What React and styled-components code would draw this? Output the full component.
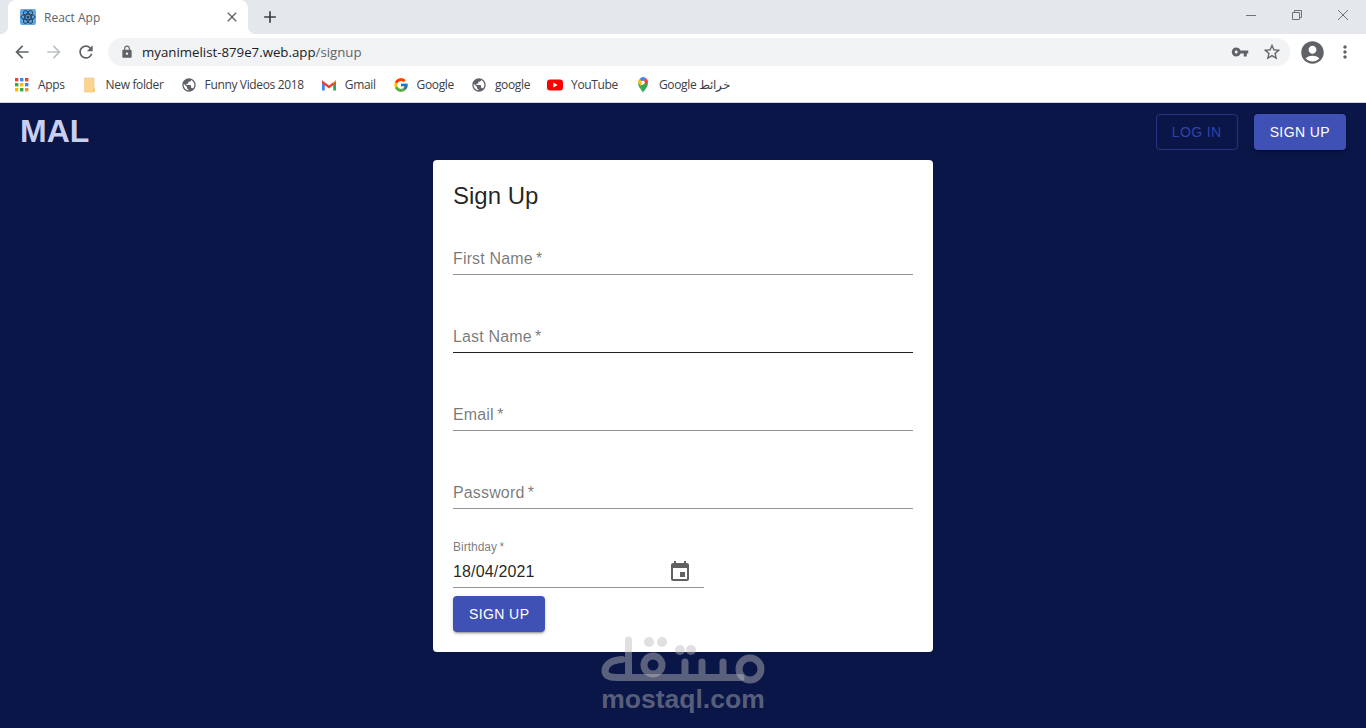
import React from "react";
import styled, { createGlobalStyle } from "styled-components";
import {
  MdArrowBack,
  MdArrowForward,
  MdRefresh,
  MdLock,
  MdVpnKey,
  MdStarBorder,
  MdAccountCircle,
  MdMoreVert,
  MdEvent,
  MdPublic,
  MdClose,
  MdAdd,
} from "react-icons/md";
import { FcGoogle } from "react-icons/fc";

const GlobalStyle = createGlobalStyle`
  html, body {
    margin: 0;
    padding: 0;
    height: 100%;
    overflow: hidden;
  }
  * {
    box-sizing: border-box;
  }
`;

const Shell = styled.div`
  width: 1366px;
  height: 728px;
  display: flex;
  flex-direction: column;
  position: relative;
  overflow: hidden;
`;

/* Start browser chrome */
const TabStrip = styled.div`
  height: 34px;
  background: #e4e7eb;
  display: flex;
  align-items: stretch;
  padding-left: 8px;
  flex-shrink: 0;
`;

const Tab = styled.div`
  position: relative;
  width: 240px;
  background: #fff;
  border-radius: 8px 8px 0 0;
  display: flex;
  align-items: center;
  padding: 0 8px 0 12px;
  font: 12px "Open Sans", sans-serif;
  color: #5f6368;

  &::before,
  &::after {
    content: "";
    position: absolute;
    bottom: 0;
    width: 8px;
    height: 8px;
  }
  &::before {
    left: -8px;
    background: radial-gradient(circle at 0 0, transparent 8px, #fff 8.5px);
  }
  &::after {
    right: -8px;
    background: radial-gradient(circle at 100% 0, transparent 8px, #fff 8.5px);
  }
`;

const TabTitle = styled.span`
  flex: 1;
  margin-left: 8px;
`;

const NewTab = styled.div`
  width: 44px;
  display: flex;
  align-items: center;
  justify-content: center;
  color: #3c4043;
  font-size: 20px;
`;

const WindowButtons = styled.div`
  margin-left: auto;
  display: flex;
`;

const WindowButton = styled.div`
  width: 46px;
  height: 29px;
  display: flex;
  align-items: center;
  justify-content: center;
`;

const Toolbar = styled.div`
  height: 36px;
  background: #fff;
  display: flex;
  align-items: center;
  padding-left: 6px;
  flex-shrink: 0;
`;

const NavIcon = styled.div`
  width: 32px;
  display: flex;
  align-items: center;
  justify-content: center;
  font-size: 20px;
  color: ${props => (props.disabled ? "#bdc1c6" : "#5f6368")};
`;

const Omnibox = styled.div`
  width: 1182px;
  height: 28px;
  margin-left: 6px;
  border-radius: 14px;
  background: #f1f3f4;
  display: flex;
  align-items: center;
  padding: 0 2px 0 12px;
  color: #5f6368;
`;

const Url = styled.div`
  flex: 1;
  margin-left: 8px;
  font: 13.25px "Open Sans", sans-serif;
  color: #202124;
`;

const UrlPath = styled.span`
  color: #5f6368;
`;

const OmniIcon = styled.div`
  display: flex;
  width: 32px;
  justify-content: center;
  font-size: ${props => props.size || 18}px;
`;

const Avatar = styled.div`
  display: flex;
  margin-left: 9px;
  font-size: 27px;
  color: #5f6368;
`;

const MoreButton = styled.div`
  display: flex;
  margin-left: 9px;
  font-size: 20px;
  color: #5f6368;
`;

const Bookmarks = styled.div`
  height: 33px;
  background: #fff;
  border-bottom: 1px solid #d4d6d9;
  display: flex;
  align-items: center;
  padding: 0 0 3px 14px;
  gap: 17px;
  flex-shrink: 0;
`;

const Bookmark = styled.div`
  display: flex;
  align-items: center;
  gap: 8px;
  font: 12px "Open Sans", sans-serif;
  color: #3c4043;
  letter-spacing: -0.35px;
  white-space: nowrap;
`;

const BookmarkIcon = styled.div`
  width: 16px;
  height: 16px;
  display: flex;
  align-items: center;
  justify-content: center;
  font-size: 16px;
  color: #5f6368;
`;
/* End browser chrome */

/* Start page styling */
const Page = styled.div`
  flex: 1;
  background: #0a1647;
  font-family: "Liberation Sans", Arial, sans-serif;
  display: flex;
  flex-direction: column;
`;

const Header = styled.header`
  height: 57px;
  display: flex;
  align-items: flex-start;
  justify-content: space-between;
  padding: 11px 20px 0;
`;

const Logo = styled.div`
  font: bold 32px/34px "Liberation Sans", Arial, sans-serif;
  color: #c9cff0;
`;

const HeaderActions = styled.div`
  display: flex;
  gap: 16px;
`;

const Button = styled.button`
  height: 36px;
  padding: 0 ${props => (props.outlined ? 15 : 16)}px;
  border-radius: 4px;
  border: ${props =>
    props.outlined ? "1px solid rgba(63, 81, 181, 0.5)" : "none"};
  background: ${props => (props.outlined ? "transparent" : "#3f51b5")};
  color: ${props => (props.outlined ? "#2f43a8" : "#fff")};
  font: 14px "Liberation Sans", Arial, sans-serif;
  letter-spacing: 0.4px;
  box-shadow: ${props =>
    props.outlined
      ? "none"
      : "0 3px 1px -2px rgba(0,0,0,.2), 0 2px 2px 0 rgba(0,0,0,.14), 0 1px 5px 0 rgba(0,0,0,.12)"};
`;

const Card = styled.form`
  align-self: center;
  width: 500px;
  height: 492px;
  background: #fff;
  border-radius: 4px;
  padding: 20px;
  display: flex;
  flex-direction: column;
  align-items: flex-start;
`;

const Title = styled.h2`
  margin: 0 0 1px;
  height: 32px;
  font: 400 24px/32px "Liberation Sans", Arial, sans-serif;
  color: rgba(0, 0, 0, 0.87);
`;

const Field = styled.div`
  width: 100%;
  height: 62px;
  margin-bottom: 16px;
  display: flex;
  align-items: flex-end;
  padding-bottom: 6px;
  font-size: 16px;
  line-height: 19px;
  letter-spacing: 0.15px;
  color: rgba(0, 0, 0, 0.54);
  border-bottom: 1px solid
    ${props => (props.hovered ? "rgba(0, 0, 0, 0.87)" : "rgba(0, 0, 0, 0.42)")};
`;

const DateField = styled.div`
  width: 251px;
  height: 48px;
  margin-top: 15px;
  border-bottom: 1px solid rgba(0, 0, 0, 0.42);
  display: flex;
  flex-direction: column;
`;

const SmallLabel = styled.label`
  font-size: 12px;
  line-height: 14px;
  color: rgba(0, 0, 0, 0.54);
`;

const DateRow = styled.div`
  display: flex;
  align-items: center;
  justify-content: space-between;
  margin-top: 6px;
  padding-right: 12px;
  font-size: 16px;
  line-height: 24px;
  letter-spacing: 0.15px;
  color: rgba(0, 0, 0, 0.87);
`;

const CalendarIcon = styled(MdEvent)`
  font-size: 24px;
  color: #616161;
`;

const SubmitButton = styled(Button)`
  margin-top: 8px;
`;

const Watermark = styled.div`
  position: absolute;
  left: 600px;
  top: 634px;
  width: 166px;
  display: flex;
  flex-direction: column;
  align-items: center;
  color: rgba(187, 187, 187, 0.46);
  pointer-events: none;
`;

const WatermarkText = styled.div`
  font: bold 26.5px/26px "Liberation Sans", Arial, sans-serif;
  white-space: nowrap;
`;
/* End page styling */

const ReactIcon = () => (
  <svg width="16" height="16" viewBox="0 0 16 16">
    <rect width="16" height="16" rx="2" fill="#5ea9e6" />
    <g fill="none" stroke="#27405f" strokeWidth="1">
      <ellipse cx="8" cy="8" rx="7" ry="2.8" />
      <ellipse cx="8" cy="8" rx="7" ry="2.8" transform="rotate(60 8 8)" />
      <ellipse cx="8" cy="8" rx="7" ry="2.8" transform="rotate(120 8 8)" />
    </g>
    <circle cx="8" cy="8" r="1.5" fill="#27405f" />
  </svg>
);

const AppsIcon = () => {
  const colors = [
    "#ea4335", "#4285f4", "#ea4335",
    "#34a853", "#fbbc05", "#4285f4",
    "#fbbc05", "#34a853", "#e8952b",
  ];
  return (
    <svg width="14" height="14" viewBox="0 0 14 14">
      {colors.map((color, idx) => (
        <rect
          key={idx}
          x={(idx % 3) * 5}
          y={Math.floor(idx / 3) * 5}
          width="3.4"
          height="3.4"
          fill={color}
        />
      ))}
    </svg>
  );
};

const FolderIcon = () => (
  <svg width="16" height="16" viewBox="0 0 16 16">
    <path d="M2.5 1h9.5v14H2.5z" fill="#fdd48e" stroke="#e8c27e" strokeWidth="0.6" />
    <path d="M11 11.5h2v3.5h-2z" fill="#f5c774" />
  </svg>
);

const GmailIcon = () => (
  <svg width="16" height="16" viewBox="0 0 16 16">
    <path d="M1 3.5v10h2.8V6.5z" fill="#4285f4" />
    <path d="M15 3.5v10h-2.8V6.5z" fill="#34a853" />
    <path d="M1 3.2 8 8.6l7-5.4v3L8 11.6 1 6.2z" fill="#ea4335" />
    <path d="M12.2 6.5 15 4.4V3.2l-2.8 2z" fill="#fbbc05" />
  </svg>
);

const YoutubeIcon = () => (
  <svg width="16" height="16" viewBox="0 0 16 16">
    <rect y="2.5" width="16" height="11" rx="3" fill="#f00" />
    <path d="M6.4 5.5v5L10.6 8z" fill="#fff" />
  </svg>
);

const MapsIcon = () => (
  <svg width="16" height="16" viewBox="0 0 16 16">
    <path d="M8 16C6.8 13 3 10 3 5.5L5.5 8 8 16z" fill="#34a853" />
    <path d="M8 16c.6-2.4 5-5.500 5-10.500L5.500 8.500z" fill="#34a853" />
    <path d="M3 5.500A5 5 0 0 1 4.500 2L8 5.500 5.500 8.500z" fill="#fbbc05" />
    <path d="M4.500 2A5 5 0 0 1 11 1L8 5.500z" fill="#4285f4" />
    <path d="M11 1a5 5 0 0 1 2 4.500L10 7.500 8 5.500z" fill="#ea4335" />
    <circle cx="8" cy="5.500" r="1.800" fill="#fff" />
  </svg>
);

const MinimizeIcon = () => (
  <svg width="12" height="12" viewBox="0 0 12 12">
    <path d="M1 6.500h10" stroke="#6f7276" />
  </svg>
);

const RestoreIcon = () => (
  <svg width="12" height="12" viewBox="0 0 12 12" fill="none" stroke="#6f7276">
    <path d="M1.500 3.500h7v7h-7z" />
    <path d="M3.500 3.500v-2h7v7h-2" />
  </svg>
);

const CloseIcon = () => (
  <svg width="12" height="12" viewBox="0 0 12 12" stroke="#6f7276">
    <path d="M1 1l10 10M11 1 1 11" />
  </svg>
);

const WatermarkLogo = () => (
  <svg
    width="166"
    height="52"
    viewBox="0 0 166 52"
    fill="none"
    stroke="currentColor"
    strokeWidth="7"
    strokeLinecap="round"
  >
    <path d="M22 25.500C11 26 5 31 5 37c0 5 5 6.500 12 6.500H141M28.500 6v37M85 28v15M102 28v15M123 28v15" />
    <circle cx="53" cy="31" r="9" />
    <circle cx="150" cy="35" r="11" />
    <g fill="currentColor" stroke="none">
      <circle cx="49" cy="8" r="5" />
      <circle cx="62" cy="8" r="5" />
      <circle cx="80" cy="16" r="5" />
      <circle cx="91" cy="16" r="5" />
    </g>
  </svg>
);

const bookmarks = [
  { label: "Apps", icon: <AppsIcon /> },
  { label: "New folder", icon: <FolderIcon /> },
  { label: "Funny Videos 2018", icon: <MdPublic /> },
  { label: "Gmail", icon: <GmailIcon /> },
  { label: "Google", icon: <FcGoogle /> },
  { label: "google", icon: <MdPublic /> },
  { label: "YouTube", icon: <YoutubeIcon /> },
  { label: "Google خرائط", icon: <MapsIcon /> },
];

const App = () => {
  return (
    <Shell>
      <GlobalStyle />
      <TabStrip>
        <Tab>
          <ReactIcon />
          <TabTitle>React App</TabTitle>
          <MdClose size={16} color="#5f6368" />
        </Tab>
        <NewTab>
          <MdAdd />
        </NewTab>
        <WindowButtons>
          <WindowButton>
            <MinimizeIcon />
          </WindowButton>
          <WindowButton>
            <RestoreIcon />
          </WindowButton>
          <WindowButton>
            <CloseIcon />
          </WindowButton>
        </WindowButtons>
      </TabStrip>
      <Toolbar>
        <NavIcon>
          <MdArrowBack />
        </NavIcon>
        <NavIcon disabled>
          <MdArrowForward />
        </NavIcon>
        <NavIcon>
          <MdRefresh />
        </NavIcon>
        <Omnibox>
          <MdLock size={14} />
          <Url>
            myanimelist-879e7.web.app<UrlPath>/signup</UrlPath>
          </Url>
          <OmniIcon>
            <MdVpnKey />
          </OmniIcon>
          <OmniIcon size={20}>
            <MdStarBorder />
          </OmniIcon>
        </Omnibox>
        <Avatar>
          <MdAccountCircle />
        </Avatar>
        <MoreButton>
          <MdMoreVert />
        </MoreButton>
      </Toolbar>
      <Bookmarks>
        {bookmarks.map((item, idx) => (
          <Bookmark key={"bookmark-" + idx}>
            <BookmarkIcon>{item.icon}</BookmarkIcon>
            {item.label}
          </Bookmark>
        ))}
      </Bookmarks>
      <Page>
        <Header>
          <Logo>MAL</Logo>
          <HeaderActions>
            <Button outlined>LOG IN</Button>
            <Button>SIGN UP</Button>
          </HeaderActions>
        </Header>
        <Card>
          <Title>Sign Up</Title>
          <Field>First Name{"\u2009"}*</Field>
          <Field hovered>Last Name{"\u2009"}*</Field>
          <Field>Email{"\u2009"}*</Field>
          <Field>Password{"\u2009"}*</Field>
          <DateField>
            <SmallLabel>Birthday{"\u2009"}*</SmallLabel>
            <DateRow>
              18/04/2021
              <CalendarIcon />
            </DateRow>
          </DateField>
          <SubmitButton>SIGN UP</SubmitButton>
        </Card>
      </Page>
      <Watermark>
        <WatermarkLogo />
        <WatermarkText>mostaql.com</WatermarkText>
      </Watermark>
    </Shell>
  );
};

export default App;
